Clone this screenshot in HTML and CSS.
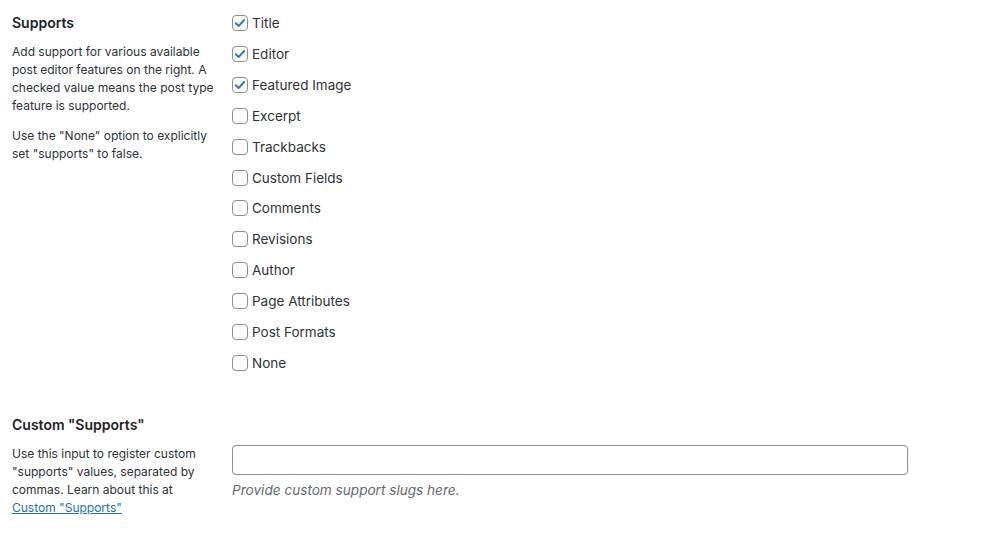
FILE: index.html
```html
<!DOCTYPE html>
<html>
<head>
<meta charset="utf-8">
<link rel="stylesheet" href="styles.css">
</head>
<body>
<div class="form">
  <div class="row row-supports">
    <div class="label-col">
      <h3 class="field-title">Supports</h3>
      <p class="desc">Add support for various available post editor features on the right. A checked value means the post type feature is supported.</p>
      <p class="desc">Use the "None" option to explicitly set "supports" to false.</p>
    </div>
    <ul class="checks">
      <li><span class="cb checked"><svg viewBox="0 0 16 16"><path d="M3.2 8.3 L6.4 11.4 L12.8 4.6"/></svg></span>Title</li>
      <li><span class="cb checked"><svg viewBox="0 0 16 16"><path d="M3.2 8.3 L6.4 11.4 L12.8 4.6"/></svg></span>Editor</li>
      <li><span class="cb checked"><svg viewBox="0 0 16 16"><path d="M3.2 8.3 L6.4 11.4 L12.8 4.6"/></svg></span>Featured Image</li>
      <li><span class="cb"></span>Excerpt</li>
      <li><span class="cb"></span>Trackbacks</li>
      <li><span class="cb"></span>Custom Fields</li>
      <li><span class="cb"></span>Comments</li>
      <li><span class="cb"></span>Revisions</li>
      <li><span class="cb"></span>Author</li>
      <li><span class="cb"></span>Page Attributes</li>
      <li><span class="cb"></span>Post Formats</li>
      <li><span class="cb"></span>None</li>
    </ul>
  </div>
  <div class="row row-custom">
    <div class="label-col">
      <h3 class="field-title">Custom "Supports"</h3>
      <p class="desc">Use this input to register custom "supports" values, separated by commas. Learn about this at <a href="#">Custom "Supports"</a></p>
    </div>
    <div class="input-col">
      <div class="text-input"></div>
      <p class="help">Provide custom support slugs here.</p>
    </div>
  </div>
</div>
</body>
</html>
```
FILE: styles.css
```css
html, body {
  margin: 0;
  padding: 0;
  background: #ffffff;
}
body {
  font-family: Inter, "Noto Sans", "Liberation Sans", sans-serif;
  color: #1d2327;
  width: 990px;
  height: 537px;
  overflow: hidden;
}
.form {
  padding-left: 12px;
}
.row {
  display: grid;
  grid-template-columns: 203px 1fr;
  column-gap: 17px;
}
.row-supports {
  padding-top: 7px;
}
.row-custom {
  padding-top: 38px;
}
.label-col {
  padding-top: 7px;
}
.row-custom .label-col {
  padding-top: 0;
}
.field-title {
  margin: 0 0 11px;
  font-size: 14px;
  line-height: 18px;
  font-weight: 600;
  color: #1d2327;
}
.desc {
  margin: 0 0 12px;
  font-size: 12px;
  line-height: 18px;
  color: #2c3338;
}
.desc a {
  color: #2271b1;
  text-decoration: underline;
}
.checks {
  list-style: none;
  margin: 0;
  padding: 1px 0 0;
}
.checks li {
  height: 30.85px;
  display: flex;
  align-items: center;
  font-size: 13.5px;
  color: #2c3338;
}
.cb {
  box-sizing: border-box;
  width: 16px;
  height: 16px;
  border: 1px solid #8c8f94;
  border-radius: 4px;
  background: #fff;
  margin-right: 4px;
  display: flex;
  align-items: center;
  justify-content: center;
}
.cb svg {
  width: 14px;
  height: 14px;
  fill: none;
  stroke: #2f78bd;
  stroke-width: 2.2;
  stroke-linecap: round;
  stroke-linejoin: round;
}
.input-col {
  padding-top: 29px;
}
.text-input {
  box-sizing: border-box;
  width: 676px;
  height: 30px;
  border: 1px solid #8c8f94;
  border-radius: 4px;
  background: #fff;
}
.help {
  margin: 6px 0 0;
  font-size: 13.6px;
  line-height: 18px;
  font-style: italic;
  color: #646970;
}
```
